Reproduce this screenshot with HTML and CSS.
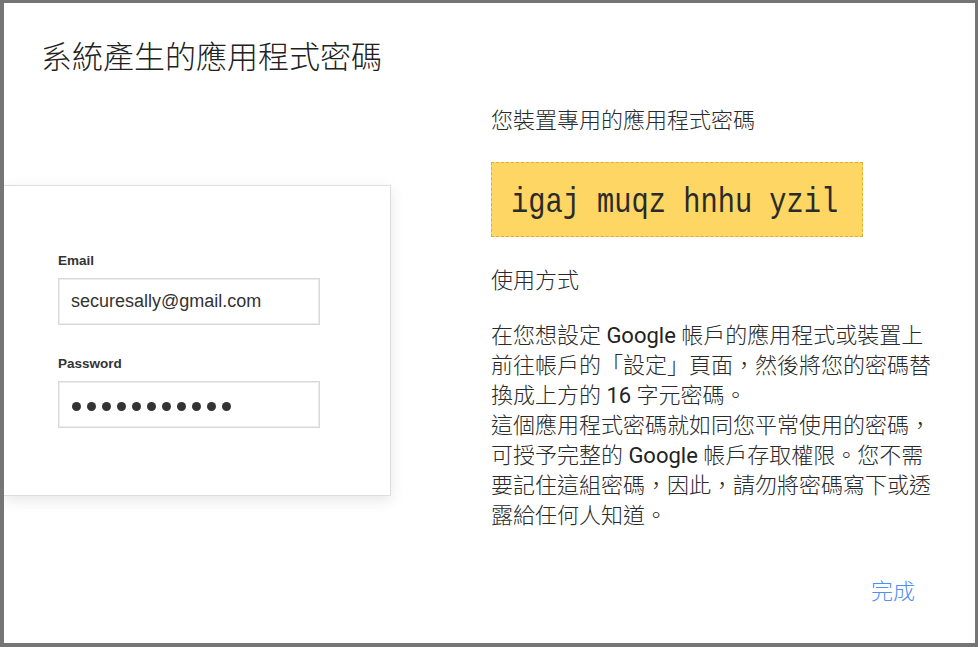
FILE: index.html
```html
<!DOCTYPE html>
<html lang="zh-Hant">
<head>
<meta charset="utf-8">
<title>系統產生的應用程式密碼</title>
<link rel="stylesheet" href="styles.css">
</head>
<body>
<div class="dialog">
  <h1 class="title">系統產生的應用程式密碼</h1>
  <div class="content">
    <div class="illustration">
      <div class="card">
        <div class="label">Email</div>
        <div class="field">securesally@gmail.com</div>
        <div class="label label-pw">Password</div>
        <div class="field field-pw">
          <span class="dot"></span><span class="dot"></span><span class="dot"></span><span class="dot"></span><span class="dot"></span><span class="dot"></span><span class="dot"></span><span class="dot"></span><span class="dot"></span><span class="dot"></span><span class="dot"></span>
        </div>
      </div>
    </div>
    <div class="info">
      <div class="heading">您裝置專用的應用程式密碼</div>
      <div class="password"><span class="pw-text">igaj muqz hnhu yzil</span></div>
      <div class="heading usage">使用方式</div>
      <p class="desc">在您想設定 <span class="latin">Google</span> 帳戶的應用程式或裝置上前往帳戶的「設定」頁面，然後將您的密碼替換成上方的 <span class="latin">16</span> 字元密碼。<br>這個應用程式密碼就如同您平常使用的密碼，可授予完整的 <span class="latin">Google</span> 帳戶存取權限。您不需要記住這組密碼，因此，請勿將密碼寫下或透露給任何人知道。</p>
    </div>
  </div>
  <div class="footer">
    <span class="done">完成</span>
  </div>
</div>
</body>
</html>
```
FILE: styles.css
```css
html, body {
  margin: 0;
  padding: 0;
}
body {
  background: #757575;
  width: 978px;
  height: 647px;
  box-sizing: border-box;
  padding: 3px 3px 4px 4px;
  font-family: Roboto, "Noto Sans CJK TC", sans-serif;
  overflow: hidden;
}
.dialog {
  background: #fff;
  width: 971px;
  height: 640px;
  box-sizing: border-box;
  padding-top: 35px;
  display: flex;
  flex-direction: column;
  overflow: hidden;
}
.title {
  margin: 0;
  padding-left: 37px;
  font-size: 31px;
  line-height: 40px;
  font-weight: 300;
  color: #212121;
}
.content {
  flex: 1;
  display: flex;
  gap: 100px;
  margin-top: 28px;
  align-items: flex-start;
}
.illustration {
  width: 387px;
  padding-top: 79px;
}
.card {
  box-sizing: border-box;
  width: 387px;
  height: 311px;
  border: 1px solid #dedede;
  border-left: none;
  box-shadow: 0 4px 14px rgba(0, 0, 0, 0.10);
  padding: 67px 0 0 54px;
  font-family: "Liberation Sans", Arial, sans-serif;
  background: #fff;
}
.label {
  font-size: 13.5px;
  line-height: 16px;
  font-weight: bold;
  color: #333;
}
.label-pw {
  margin-top: 31px;
}
.field {
  margin-top: 9px;
  box-sizing: border-box;
  width: 262px;
  height: 47px;
  border: 1px solid #d9d9d9;
  box-shadow: inset 0 0 0 1px #ececec;
  display: flex;
  align-items: center;
  padding-left: 12px;
  font-size: 18px;
  color: #333;
}
.field-pw {
  padding-left: 13px;
  gap: 6px;
  padding-top: 4px;
}
.dot {
  width: 9px;
  height: 9px;
  border-radius: 50%;
  background: #333;
}
.info {
  width: 450px;
}
.heading {
  font-size: 22px;
  line-height: 30px;
  font-weight: 300;
  color: #2a2a2a;
}
.password {
  margin-top: 26px;
  box-sizing: border-box;
  width: 372px;
  height: 75px;
  background: #fdd663;
  border: 1px dashed #dfae33;
  padding: 20px 0 0 19px;
  overflow: hidden;
}
.pw-text {
  display: inline-block;
  font-family: "Liberation Mono", "Courier New", monospace;
  font-size: 35px;
  line-height: 40px;
  color: #2a2a2a;
  white-space: pre;
  transform: scaleX(0.82);
  transform-origin: left center;
}
.usage {
  margin-top: 29px;
}
.desc {
  margin: 25px 0 0;
  font-size: 22px;
  line-height: 30px;
  font-weight: 300;
  color: #2a2a2a;
}
.latin {
  font-weight: 400;
  color: #222;
}
.footer {
  display: flex;
  justify-content: flex-end;
  padding: 0 60px 36px 0;
}
.done {
  font-size: 22px;
  line-height: 30px;
  font-weight: 300;
  color: #4d8ef7;
}
```
